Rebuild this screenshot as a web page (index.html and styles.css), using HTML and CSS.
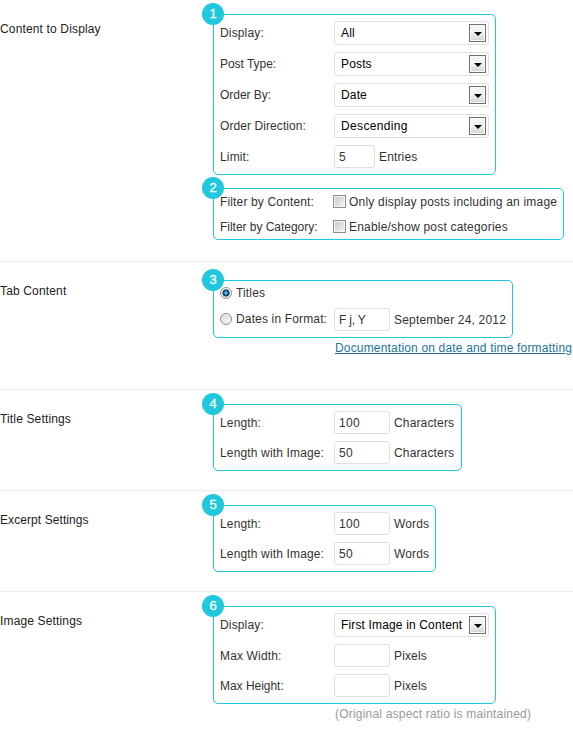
FILE: index.html
```html
<!DOCTYPE html>
<html lang="en">
<head>
<meta charset="utf-8">
<title>Content Settings</title>
<link rel="stylesheet" href="styles.css">
</head>
<body>
<main>
  <section class="section content">
    <h2>Content to Display</h2>
    <div class="groups">
      <div class="box wide">
        <span class="badge">1</span>
        <div class="row"><span class="label">Display:</span><div class="select"><span>All</span><i class="arrow"></i></div></div>
        <div class="row"><span class="label tight">Post Type:</span><div class="select"><span>Posts</span><i class="arrow"></i></div></div>
        <div class="row"><span class="label tight">Order By:</span><div class="select"><span>Date</span><i class="arrow"></i></div></div>
        <div class="row"><span class="label snug">Order Direction:</span><div class="select"><span class="loose">Descending</span><i class="arrow"></i></div></div>
        <div class="row"><span class="label">Limit:</span><div class="input small">5</div><span class="unit">Entries</span></div>
      </div>
      <div class="box filters">
        <span class="badge">2</span>
        <div class="row"><span class="label">Filter by Content:</span><i class="check"></i><span class="option">Only display posts including an image</span></div>
        <div class="row"><span class="label tight">Filter by Category:</span><i class="check"></i><span class="option">Enable/show post categories</span></div>
      </div>
    </div>
  </section>
  <section class="section tab">
    <h2>Tab Content</h2>
    <div class="groups">
      <div class="box tabs">
        <span class="badge">3</span>
        <div class="row"><i class="radio on"></i><span>Titles</span></div>
        <div class="row"><span class="label format"><i class="radio"></i><span>Dates in Format:</span></span><div class="input pattern">F j, Y</div><span class="unit date">September 24, 2012</span></div>
      </div>
      <a class="doc" href="#">Documentation on date and time formatting</a>
    </div>
  </section>
  <section class="section title">
    <h2>Title Settings</h2>
    <div class="groups">
      <div class="box chars">
        <span class="badge">4</span>
        <div class="row"><span class="label">Length:</span><div class="input">100</div><span class="unit">Characters</span></div>
        <div class="row"><span class="label">Length with Image:</span><div class="input">50</div><span class="unit">Characters</span></div>
      </div>
    </div>
  </section>
  <section class="section excerpt">
    <h2 class="snug">Excerpt Settings</h2>
    <div class="groups">
      <div class="box words">
        <span class="badge">5</span>
        <div class="row"><span class="label">Length:</span><div class="input">100</div><span class="unit">Words</span></div>
        <div class="row"><span class="label">Length with Image:</span><div class="input">50</div><span class="unit">Words</span></div>
      </div>
    </div>
  </section>
  <section class="section image">
    <h2>Image Settings</h2>
    <div class="groups">
      <div class="box wide">
        <span class="badge">6</span>
        <div class="row"><span class="label">Display:</span><div class="select first"><span>First Image in Content</span><i class="arrow"></i></div></div>
        <div class="row"><span class="label">Max Width:</span><div class="input"></div><span class="unit">Pixels</span></div>
        <div class="row"><span class="label tight">Max Height:</span><div class="input"></div><span class="unit">Pixels</span></div>
      </div>
      <p class="note">(Original aspect ratio is maintained)</p>
    </div>
  </section>
</main>
</body>
</html>
```
FILE: styles.css
```css
* { box-sizing: border-box; }
body {
  margin: 0;
  background: #fff;
  color: #333;
  font: 12px/16px "Liberation Sans", Arial, sans-serif;
  letter-spacing: .15px;
  white-space: nowrap;
  overflow: hidden;
}
.section {
  display: grid;
  grid-template-columns: 213px 1fr;
  align-items: start;
  padding-top: 14px;
  border-bottom: 1px solid #ececec;
}
.content { height: 262px; }
.tab { height: 128px; padding-top: 18px; }
.title, .excerpt { height: 101px; }
.image { height: 142px; border-bottom: 0; }
h2 {
  margin: 7px 0 0;
  color: #222;
  font-size: 12px;
  font-weight: 400;
}
.tab h2 { margin-top: 3px; }
.groups {
  display: flex;
  flex-direction: column;
  align-items: flex-start;
}
.box {
  position: relative;
  display: flex;
  flex-direction: column;
  gap: 7px;
  padding: 6px;
  border: 1px solid #1fc8dc;
  border-radius: 5px;
}
.wide { width: 283px; }
.filters { width: 351px; margin-top: 13px; gap: 12px; }
.tabs { width: 300px; gap: 9px; }
.chars { width: 249px; }
.words { width: 223px; }
.badge {
  position: absolute;
  left: -12px;
  top: -12px;
  width: 22px;
  height: 22px;
  border-radius: 50%;
  background: #1fc8dc;
  color: #fff;
  font-size: 13px;
  line-height: 22px;
  letter-spacing: 0;
  text-align: center;
  -webkit-text-stroke: .3px #fff;
}
.row { display: flex; align-items: center; }
.filters .row { height: 13px; }
.tabs .row:nth-of-type(1) { height: 12px; }
.label { display: flex; align-items: center; width: 114px; flex: none; }
.format { padding-bottom: 1px; }
.tight { letter-spacing: -.03px; }
.snug { letter-spacing: .08px; }
.loose { letter-spacing: .35px; }
.select, .input {
  display: flex;
  align-items: center;
  border: 1px solid #dfdfdf;
  border-radius: 3px;
  flex: none;
}
.select {
  justify-content: space-between;
  width: 155px;
  height: 24px;
  padding: 0 2px 0 6px;
  color: #000;
}
.input { width: 56px; height: 23px; padding-left: 4px; letter-spacing: .3px; }
.pattern { letter-spacing: -.2px; }
.small { width: 41px; }
.unit { margin-left: 4px; }
.arrow {
  display: flex;
  align-items: center;
  justify-content: center;
  width: 17px;
  height: 18px;
  flex: none;
  border: 1px solid #707070;
  background: linear-gradient(#f3f3f3 45%, #d3d3d3);
  box-shadow: inset 0 0 0 1px #fafafa;
}
.arrow::after {
  content: "";
  margin-top: 2px;
  border: 4px solid transparent;
  border-top-color: #000;
  border-bottom: 0;
}
.check {
  width: 13px;
  height: 13px;
  flex: none;
  margin-left: -1px;
  border: 1px solid #8e8f8f;
  background: linear-gradient(135deg, #c4c8cc, #f4f4f4) content-box;
  padding: 1px;
  box-shadow: inset 0 0 0 1px #f4f4f4;
}
.option { margin-left: 3px; letter-spacing: .2px; }
.radio {
  width: 12px;
  height: 12px;
  flex: none;
  margin-right: 4px;
  border: 1px solid #8e8f8f;
  border-radius: 50%;
  background: radial-gradient(circle at 65% 65%, #f5f5f5, #c8cbce);
  box-shadow: inset 0 0 0 1px #f4f4f4;
}
.on { background: radial-gradient(circle, #58c4ea 0 1px, #12618d 2px, #0b3250 3.2px, #e4e7ea 4px); }
.doc {
  margin: 2px 0 0 122px;
  color: #21759b;
  text-decoration: underline;
  letter-spacing: .17px;
}
.date { letter-spacing: .18px; }
.note { margin: 2px 0 0 122px; color: #999; letter-spacing: .2px; }
```
